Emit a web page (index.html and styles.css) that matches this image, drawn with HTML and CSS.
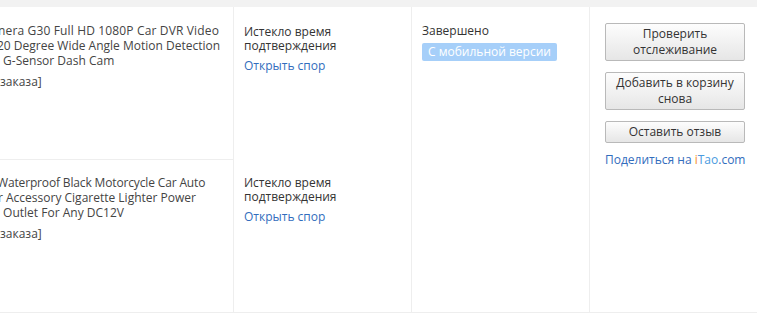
FILE: index.html
```html
<!DOCTYPE html>
<html lang="ru">
<head>
<meta charset="utf-8">
<title>Заказ</title>
<link rel="stylesheet" href="styles.css">
</head>
<body>
<div class="topbar"></div>
<div class="order">
  <div class="cell product p1">
    <div class="title">
      <span class="line cut1">nera G30 Full HD 1080P Car DVR Video</span>
      <span class="line cut2">20 Degree Wide Angle Motion Detection</span>
      <span class="line">&nbsp;G-Sensor Dash Cam</span>
    </div>
    <div class="snap">заказа]</div>
  </div>
  <div class="cell status s1">
    <div class="state">Истекло время подтверждения</div>
    <a class="link dispute" href="#">Открыть спор</a>
  </div>
  <div class="cell order-status">
    <div class="state">Завершено</div>
    <span class="badge">С мобильной версии</span>
  </div>
  <div class="cell actions">
    <button class="btn">Проверить отслеживание</button>
    <button class="btn">Добавить в корзину снова</button>
    <button class="btn">Оставить отзыв</button>
    <a class="link share" href="#">Поделиться на <span class="i">i</span><span class="tao">Tao</span>.com</a>
  </div>
  <div class="cell product p2">
    <div class="title">
      <span class="line cut4">Waterproof Black Motorcycle Car Auto</span>
      <span class="line cut3">r Accessory Cigarette Lighter Power</span>
      <span class="line">&nbsp;Outlet For Any DC12V</span>
    </div>
    <div class="snap">заказа]</div>
  </div>
  <div class="cell status s2">
    <div class="state">Истекло время подтверждения</div>
    <a class="link dispute" href="#">Открыть спор</a>
  </div>
</div>
</body>
</html>
```
FILE: styles.css
```css
* { box-sizing: border-box; }
html, body { margin: 0; padding: 0; background: #fff; }
body {
  font-family: "Open Sans", "Liberation Sans", sans-serif;
  font-size: 12px;
  color: #333;
  width: 757px;
  overflow: hidden;
}
.topbar { height: 7px; background: #f2f2f2; }
.order {
  display: grid;
  grid-template-columns: 234px 178px 178px 167px;
  grid-template-rows: 153px 152px;
  border-bottom: 1px solid #eeeeee;
}
.cell { padding-top: 16px; }
.product {
  grid-column: 1;
  border-right: 1px solid #eeeeee;
  color: #444;
  line-height: 14.8px;
  overflow: hidden;
}
.p1 { grid-row: 1; border-bottom: 1px solid #eeeeee; padding-top: 17px; }
.p2 { grid-row: 2; }
.line { display: block; white-space: nowrap; }
.cut1 { margin-left: -2px; letter-spacing: 0.15px; }
.cut2 { margin-left: -3px; }
.cut3 { margin-left: -2px; }
.cut4 { margin-left: -3px; letter-spacing: -0.15px; }
.snap { margin-top: 7px; }
.status {
  grid-column: 2;
  border-right: 1px solid #eeeeee;
  padding-left: 10px;
  padding-right: 40px;
  line-height: 14px;
}
.s1 { grid-row: 1; padding-top: 18px; }
.s2 { grid-row: 2; padding-top: 16px; }
.link { color: #326dbd; text-decoration: none; }
.dispute { display: inline-block; margin-top: 6px; }
.order-status {
  grid-column: 3;
  grid-row: 1 / 3;
  border-right: 1px solid #eeeeee;
  padding-left: 10px;
  padding-top: 17px;
  line-height: 14px;
}
.badge {
  display: inline-block;
  margin-top: 5px;
  padding: 2px 6px;
  background: #a6cff9;
  color: #fff;
  border-radius: 2px;
  line-height: 14px;
}
.actions {
  grid-column: 4;
  grid-row: 1 / 3;
  padding-left: 15px;
  display: flex;
  flex-direction: column;
  align-items: flex-start;
}
.btn {
  width: 140px;
  margin: 0 0 10px 0;
  padding: 2px 4px;
  font: inherit;
  color: #333;
  line-height: 16px;
  background: linear-gradient(#fdfdfd, #e6e6e6);
  border: 1px solid #b9b9b9;
  border-radius: 2px;
  text-align: center;
}
.btn + .btn { margin-top: 1px; }
.share { margin-top: 0; line-height: 14px; }
.i { color: #f5901e; }
.tao { color: #4a9be0; }
```
